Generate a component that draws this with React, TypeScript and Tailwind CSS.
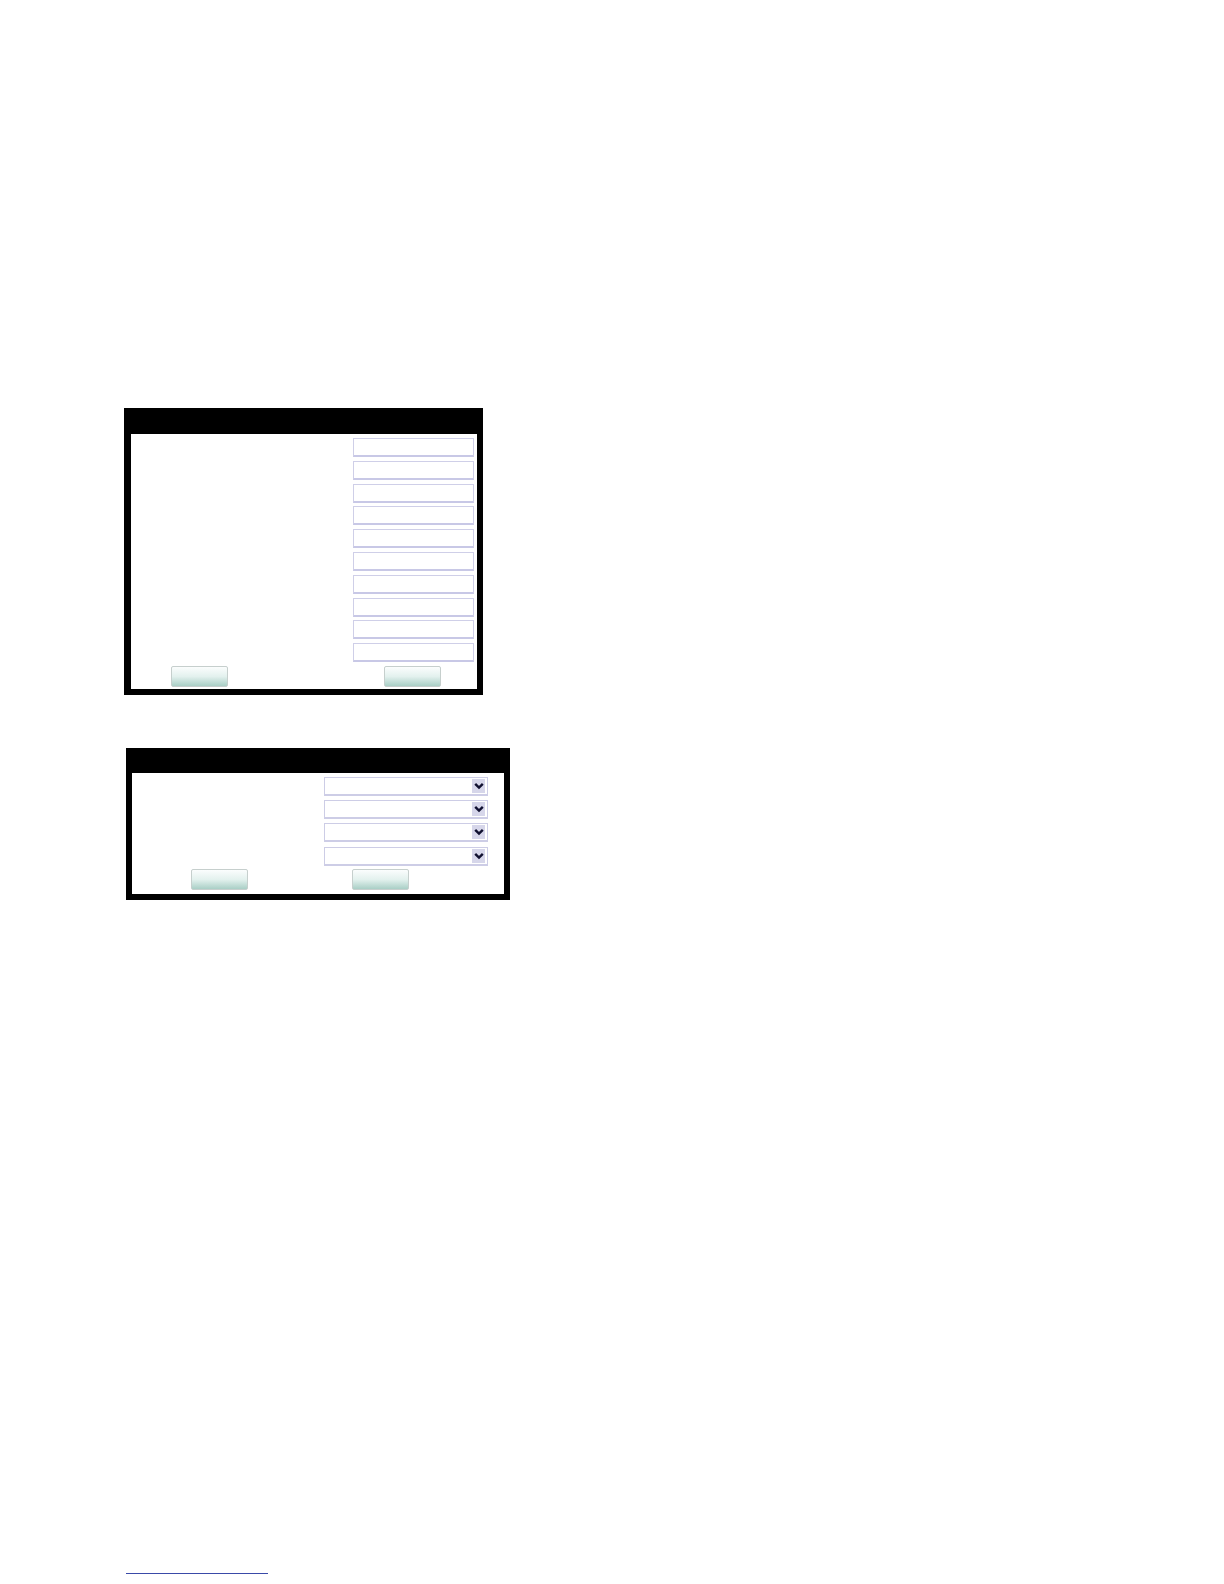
import React from "react";

function Field() {
  return (
    <div className="h-[19px] w-[121px] border border-[#cfcfe8] border-b-[2px] border-b-[#c8c8e6] bg-white" />
  );
}

function Btn() {
  return (
    <div className="h-[21px] w-[57px] rounded-[2px] border border-[#c6cfcd] bg-gradient-to-b from-[#fbfdfd] via-[#e3f1ee] to-[#a9cfc6]" />
  );
}

function SelectBox() {
  return (
    <div className="flex h-[19px] w-[164px] items-center justify-end border border-[#cdcde6] border-b-[2px] bg-white pr-[2px]">
      <div className="flex h-[14px] w-[13px] items-center justify-center bg-[#d6d6ea]">
        <svg width="10" height="8" viewBox="0 0 10 8">
          <path d="M1.2 1.8 L5 5.6 L8.8 1.8" fill="none" stroke="#101030" strokeWidth="2.4" />
        </svg>
      </div>
    </div>
  );
}

export default function App() {
  return (
    <div className="relative h-[1584px] w-[1224px] overflow-hidden bg-white" style={{ fontFamily: '"Liberation Sans", Arial, sans-serif' }}>
      <div className="pt-[408px]">
        {/* Panel 1 */}
        <div className="ml-[124px] flex h-[287px] w-[359px] flex-col bg-black">
          <div className="h-[26px] shrink-0" />
          <div className="ml-[7px] mr-[6px] mb-[6px] flex flex-1 flex-col bg-white pt-[4px]">
            <div className="ml-[222px] flex flex-col gap-[3.8px]">
              {Array.from({ length: 10 }).map((_, i) => (
                <Field key={i} />
              ))}
            </div>
            <div className="mt-[4px] flex pl-[40px]">
              <Btn />
              <div className="ml-[156px]">
                <Btn />
              </div>
            </div>
          </div>
        </div>

        {/* Panel 2 */}
        <div className="ml-[126px] mt-[53px] flex h-[152px] w-[384px] flex-col bg-black">
          <div className="h-[25px] shrink-0" />
          <div className="ml-[6px] mr-[6px] mb-[6px] flex flex-1 flex-col bg-white pt-[4px]">
            <div className="ml-[192px] flex flex-col gap-[4.2px]">
              {Array.from({ length: 4 }).map((_, i) => (
                <SelectBox key={i} />
              ))}
            </div>
            <div className="mt-[3px] flex pl-[59px]">
              <Btn />
              <div className="ml-[104px]">
                <Btn />
              </div>
            </div>
          </div>
        </div>

        {/* footnote rule */}
        <div className="ml-[126px] mt-[673px] h-px w-[142px] bg-[#3a4aa8]" />
      </div>
    </div>
  );
}
